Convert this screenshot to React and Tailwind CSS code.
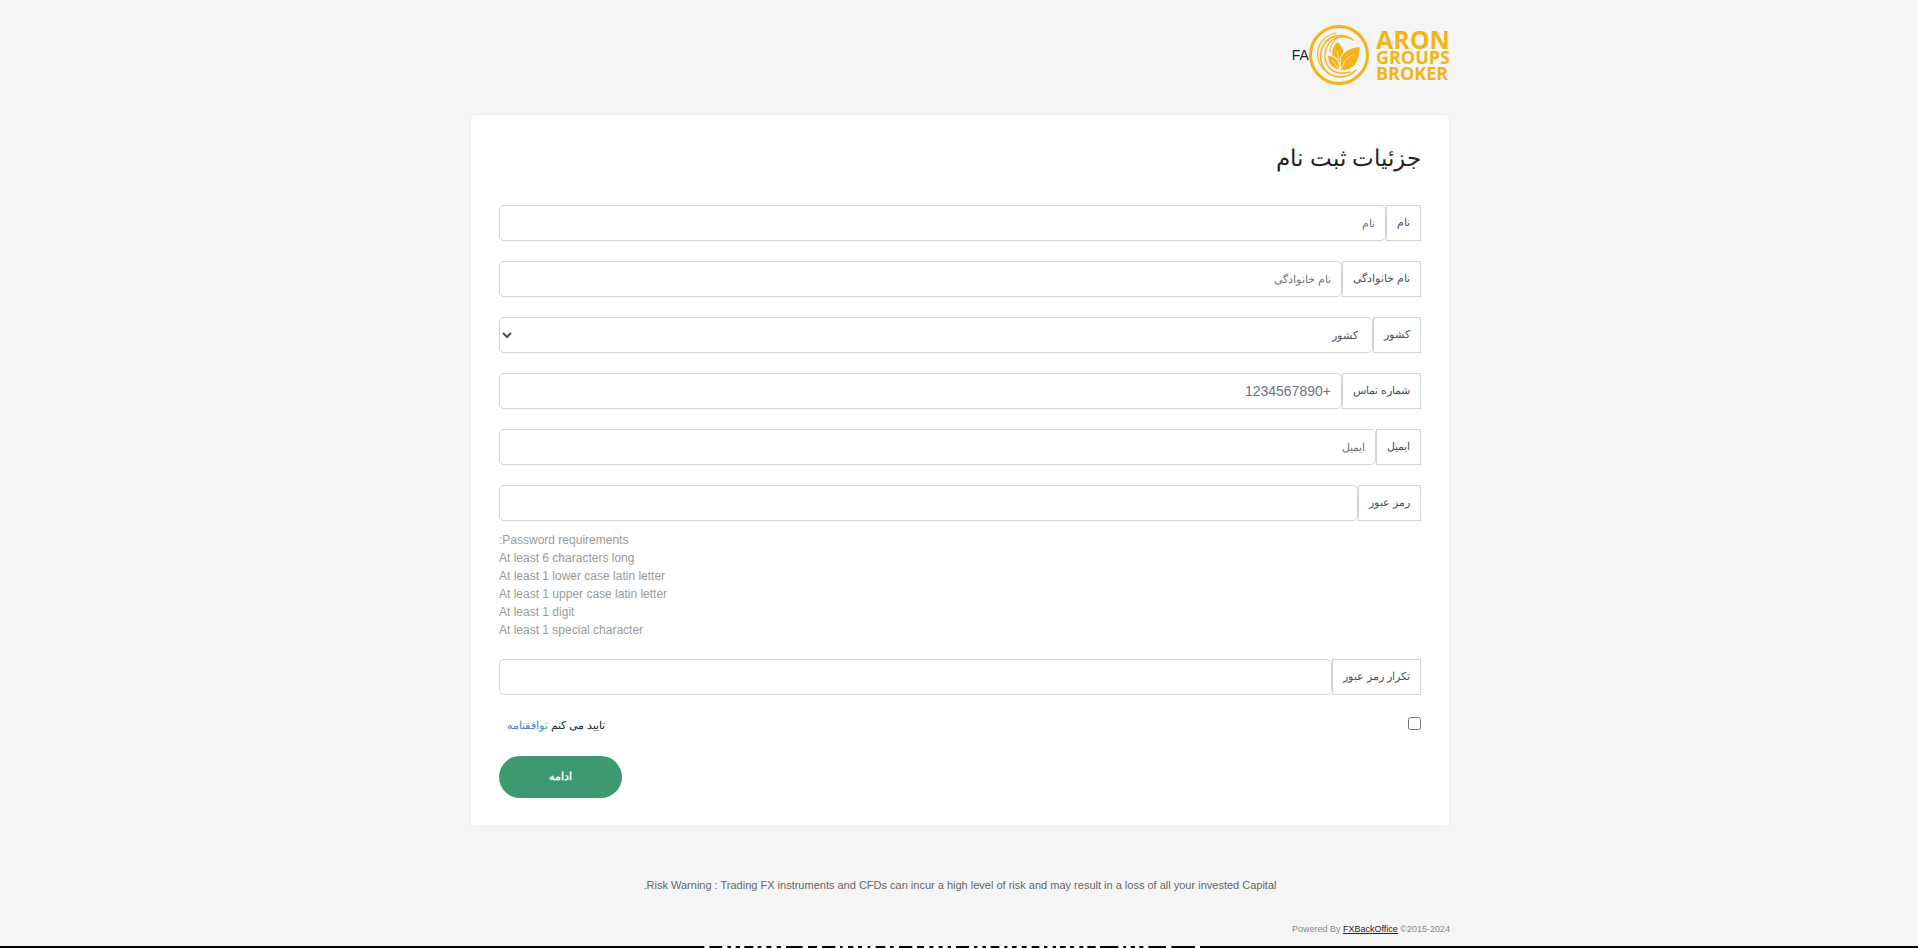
import { useId } from 'react'
import clsx from 'clsx'

const requirements = [
  'At least 6 characters long',
  'At least 1 lower case latin letter',
  'At least 1 upper case latin letter',
  'At least 1 digit',
  'At least 1 special character',
]

const inputClasses =
  'h-9 min-w-0 flex-1 rounded-[5px] border border-[#ced4da] bg-white px-2.5 text-[#495057] placeholder-[#6c757d] outline-none'

function Logo() {
  return (
    <a href="#" dir="ltr" className="flex items-center gap-[7px] text-[#f3b31b]" aria-label="Aron Groups Broker">
      <svg className="size-[60px]" viewBox="0 0 60 60" fill="none" stroke="currentColor">
        <circle cx="30" cy="30" r="28.5" strokeWidth="3" />
        <g strokeLinecap="round">
          <path strokeWidth="1.2" d="M27 8C13 11 7 22 9 33c1 5 3 9 6 12" />
          <path strokeWidth="1.6" d="M44 15C34 7 18 10 13 23c-5 15 4 29 18 29 7 0 12-3 16-7" />
          <path strokeWidth="1.4" d="M41 13c-9-4-20 0-24 11-4 12 3 23 14 24 4 0 7 0 10-1" />
          <path strokeWidth="1.1" d="M35 11c-8 1-14 7-14 16" />
        </g>
        <g fill="currentColor" stroke="#f5f5f5" strokeWidth="1">
          <path d="M28.500 16.500c6 5 9 13 4 19.500l-2.500 4c-1-5-3-8-7-9-1-6 1-10 5.500-14.500z" />
          <path d="M51 21.500c-13 1-21 8-20 17l.5 7c13 1 20-9 19.500-24z" />
          <path d="M18.500 30c0 8 4 14 12 15 1-9-4-14-12-15z" />
        </g>
        <path stroke="#f5f5f5" strokeWidth="0.7" d="M28.500 26l1 9M43 30c-5 3-9 8-11 14M23 35l7 9" />
      </svg>
      <span className="flex flex-col font-['Open_Sans',sans-serif] font-bold">
        <span className="text-[25px] leading-5">ARON</span>
        <span className="text-[18px] leading-4">GROUPS</span>
        <span className="text-[18px] leading-4">BROKER</span>
      </span>
    </a>
  )
}

function Field({ label, children, className = 'text-[11px]', ...props }) {
  const id = useId()
  return (
    <div className="flex">
      <label htmlFor={id} className="flex h-9 items-center border border-[#ced4da] px-2.5 text-[11px] text-[#495057]">
        {label}
      </label>
      {children ? (
        <select id={id} className={clsx(inputClasses, className)}>
          {children}
        </select>
      ) : (
        <input id={id} className={clsx(inputClasses, className)} {...props} />
      )}
    </div>
  )
}

// Top edge of the white lettering in the black banner below the fold
function Banner() {
  return (
    <div className="mt-auto h-0.5 bg-black">
      <svg className="mx-auto block h-0.5 w-[510px]" viewBox="0 0 1530 6" preserveAspectRatio="none" aria-hidden="true">
        <path
          stroke="white"
          strokeWidth="6"
          d="M1 3H16M55 3H70M81 3H95M108 3H121M148 3H161M172 3H187M202 3H218M231 3H246M296 3H312M339 3H354M394 3H408M416 3H432M448 3H462M474 3H491M499 3H515M544 3H558M569 3H585M625 3H639M660 3H676M688 3H704M716 3H731M741 3H756M795 3H810M820 3H835M846 3H860M886 3H901M910 3H924M938 3H953M968 3H983M1006 3H1020M1030 3H1046M1056 3H1068M1085 3H1098M1110 3H1126M1138 3H1150M1175 3H1188M1243 3H1258M1266 3H1280M1293 3H1306M1318 3H1333M1386 3H1402M1473 3H1488"
        />
      </svg>
    </div>
  )
}

export default function App() {
  return (
    <div
      dir="rtl"
      className="flex min-h-screen flex-col bg-[#f5f5f5] font-['Liberation_Sans',Arial,sans-serif] text-sm text-[#212529]"
    >
      <div className="w-full pl-0.5">
        <div className="mx-auto max-w-[980px]">
          <header className="flex h-[114px] items-center pb-1">
            <Logo />
            <span>FA</span>
          </header>

          <main className="rounded-[5px] border border-[#ececec] bg-white p-7">
            <h1 className="h-[62px] text-[23px] leading-[30px]">جزئیات ثبت نام</h1>
            <form className="flex flex-col gap-5">
              <Field label="نام" placeholder="نام" />
              <Field label="نام خانوادگی" placeholder="نام خانوادگی" />
              <Field label="کشور">
                <option>کشور</option>
              </Field>
              <Field label="شماره تماس" placeholder="+1234567890" className="text-sm" />
              <Field label="ایمیل" placeholder="ایمیل" />
              <div>
                <Field label="رمز عبور" type="password" />
                <div className="mt-2.5 text-left text-xs leading-[18px] text-[#999]">
                  <p>Password requirements:</p>
                  {requirements.map((item) => (
                    <p key={item}>{item}</p>
                  ))}
                </div>
              </div>
              <Field label="تکرار رمز عبور" type="password" />
              <div className="flex items-start justify-between">
                <input id="agree" type="checkbox" className="mt-0.5 size-[13px]" />
                <label htmlFor="agree" className="pl-2 text-[11px] leading-[21px]">
                  تایید می کنم <a href="#" className="text-[#428bca]">توافقنامه</a>
                </label>
              </div>
              <button type="button" className="h-[42px] w-[123px] self-end rounded-full bg-[#3d9970] text-[11px] font-bold text-white">
                ادامه
              </button>
            </form>
          </main>

          <footer className="text-[#666]">
            <p className="mt-[50px] text-center text-[11px] leading-4">
              Risk Warning : Trading FX instruments and CFDs can incur a high level of risk and may result in a loss of all your invested Capital.
            </p>
            <p dir="ltr" className="mt-7 text-right text-[9px] leading-4 text-[#888]">
              Powered By <a href="#" className="text-[#212529] underline">FXBackOffice</a> ©2015-2024
            </p>
          </footer>
        </div>
      </div>
      <Banner />
    </div>
  )
}
